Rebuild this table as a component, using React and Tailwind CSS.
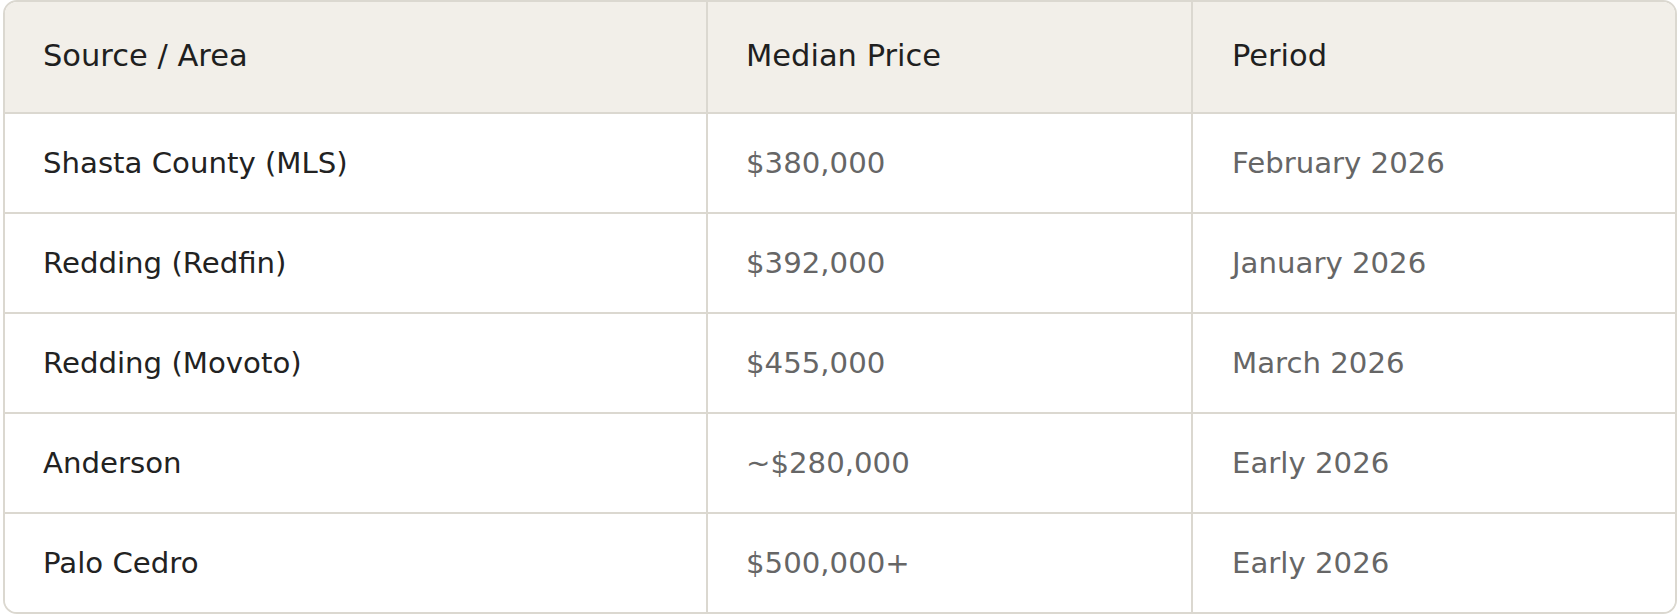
import React from 'react';

const rows = [
  { area: 'Shasta County (MLS)', price: '$380,000', period: 'February 2026' },
  { area: 'Redding (Redfin)', price: '$392,000', period: 'January 2026' },
  { area: 'Redding (Movoto)', price: '$455,000', period: 'March 2026' },
  { area: 'Anderson', price: '~$280,000', period: 'Early 2026' },
  { area: 'Palo Cedro', price: '$500,000+', period: 'Early 2026' },
];

export default function App() {
  return (
    <div className="bg-white pl-[3px] font-['DejaVu_Sans',sans-serif] text-[29.2px]">
      <div className="w-[1674px] border-2 border-[#dbd8d0] rounded-[14px] overflow-hidden">
        <div className="grid grid-cols-[701px_485px_1fr] bg-[#f2efe9] text-[#1f1f1f] text-[30.5px]">
          <div className="h-[112px] border-b-2 border-[#dbd8d0] flex items-center pl-[38px] pb-[2px]">Source / Area</div>
          <div className="h-[112px] border-b-2 border-l-2 border-[#dbd8d0] flex items-center pl-[38px] pb-[2px]">Median Price</div>
          <div className="h-[112px] border-b-2 border-l-2 border-[#dbd8d0] flex items-center pl-[39px] pb-[2px]">Period</div>
        </div>
        {rows.map((r, i) => {
          const last = i === rows.length - 1;
          const rowCls = last ? 'h-[98px]' : 'h-[100px] border-b-2';
          return (
            <div key={r.area} className="grid grid-cols-[701px_485px_1fr] bg-white">
              <div className={`${rowCls} border-[#dbd8d0] flex items-center pl-[38px] pt-[1px] text-[#222222]`}>{r.area}</div>
              <div className={`${rowCls} border-l-2 border-[#dbd8d0] flex items-center pl-[38px] pt-[1px] text-[#666666]`}>{r.price}</div>
              <div className={`${rowCls} border-l-2 border-[#dbd8d0] flex items-center pl-[39px] pt-[1px] text-[#666666]`}>{r.period}</div>
            </div>
          );
        })}
      </div>
    </div>
  );
}
